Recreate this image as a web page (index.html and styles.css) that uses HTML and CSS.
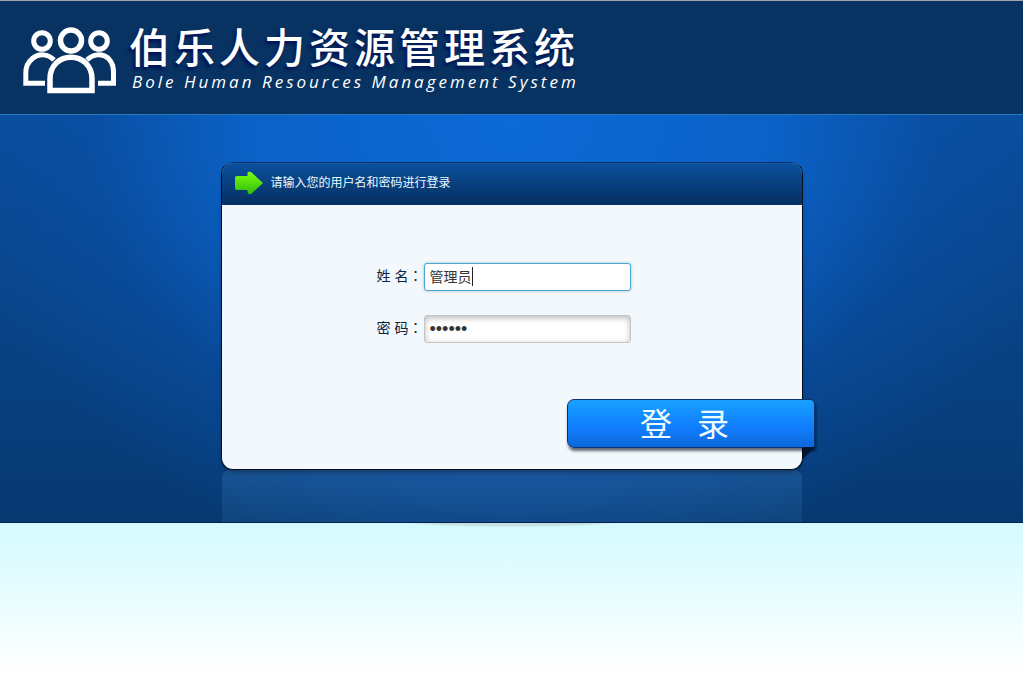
FILE: index.html
```html
<!DOCTYPE html>
<html lang="zh-CN">
<head>
    <meta charset="UTF-8">
    <meta name="viewport" content="width=device-width, initial-scale=1.0">
    <title>伯乐人力资源管理系统</title>
    <link rel="stylesheet" href="styles.css">
</head>
<body>

    <header class="header">
        <svg class="logo" viewBox="0 0 94 68" fill="none" stroke="#fff" stroke-width="5" aria-hidden="true">
            <circle cx="19" cy="15" r="8.3"/>
            <circle cx="76" cy="15" r="8.3"/>
            <circle cx="48" cy="14.5" r="10.5" stroke-width="5.5"/>
            <path d="M31 34C25 28 16 27 10 32C4 37 2.8 41 2.8 48V57.3H22"/>
            <path d="M64 34C70 28 79 27 85 32C90 37 90.5 41 90.5 48V57.3H75"/>
            <path d="M27 64.500V53C27 24 69 24 69 53V64.500Z" stroke-width="5.5"/>
        </svg>
        <div class="brand">
            <h1>伯乐人力资源管理系统</h1>
            <p>Bole Human Resources Management System</p>
        </div>
    </header>

    <main class="stage">
        <section class="panel">
            <div class="panel-head">
                <svg class="arrow" viewBox="0 0 30 26" aria-hidden="true">
                    <defs>
                        <linearGradient id="green" x1="0" y1="0" x2="0" y2="1">
                            <stop offset="0" stop-color="#7dff10"/>
                            <stop offset="1" stop-color="#2cbd0a"/>
                        </linearGradient>
                    </defs>
                    <path d="M3 6H13.500V3Q14 1 17 2L29 13L17 24Q14 25 13.500 22V20H3Q1 20 1 18V8Q1 6 3 6Z" fill="url(#green)"/>
                </svg>
                <h2>请输入您的用户名和密码进行登录</h2>
            </div>

            <!-- Login Form -->
            <form class="login-form">
                <div class="field">
                    <label for="username">姓 名<span lang="zh-TW">：</span></label>
                    <input type="text" id="username" class="active" value="管理员">
                </div>
                <div class="field">
                    <label for="password">密 码<span lang="zh-TW">：</span></label>
                    <input type="password" id="password" value="123456">
                </div>
                <button type="submit">登<span></span>录</button>
            </form>
        </section>
        <div class="reflection"></div>
    </main>

    <div class="floor-shadow"></div>

</body>
</html>
```

FILE: styles.css
```css
* {
    box-sizing: border-box;
}
body {
    margin: 0;
    min-height: 100vh;
    display: flex;
    flex-direction: column;
    font-family: "Liberation Sans", "Noto Sans CJK SC", sans-serif;
    background: linear-gradient(#d3faff 523px, #fff 673px);
}
.header {
    display: flex;
    align-items: flex-start;
    gap: 12px;
    padding: 25px 23px 20px;
    background-color: #073261;
    border-top: 1px solid #a2a5a5;
    border-bottom: 1px solid #287ab8;
}
.logo {
    width: 94px;
    height: 68px;
    flex-shrink: 0;
}
.brand {
    color: #fff;
    white-space: nowrap;
}
.brand h1 {
    margin: 0;
    font-size: 41px;
    line-height: 46px;
    font-weight: 500;
    letter-spacing: 4px;
    text-shadow: -2px 3px 3px #001458;
}
.brand p {
    margin: 0 0 0 3px;
    font-family: "Open Sans", sans-serif;
    font-size: 17px;
    line-height: 20px;
    font-style: italic;
    letter-spacing: 3px;
}
.stage {
    padding: 47px 20px 0;
    display: flex;
    flex-direction: column;
    align-items: center;
    border-bottom: 1px solid #04204a;
    background:
        radial-gradient(ellipse 56% 115% at 50% 0, #0c69d6 0%, #0b62c8 45%, rgba(9, 80, 168, 0.5) 75%, rgba(7, 62, 126, 0) 100%),
        linear-gradient(#0a4d9c, #073971);
}
.panel {
    width: 100%;
    max-width: 582px;
    background-color: #f2f8fc;
    border: 1px solid #020d1d;
    border-top-color: #06306c;
    border-radius: 12px;
    box-shadow: 0 5px 6px -4px #001229;
}
.panel-head {
    height: 42px;
    padding: 0 0 2px 12px;
    display: flex;
    align-items: center;
    gap: 7px;
    border-radius: 11px 11px 0 0;
    background: linear-gradient(#0b509f, #062f60);
    box-shadow: inset 0 1px 0 #17589f;
}
.arrow {
    width: 30px;
    height: 26px;
}
.panel-head h2 {
    margin: 0;
    color: #e8fbff;
    font-size: 12px;
    line-height: 12px;
    font-weight: 400;
}
.login-form {
    padding: 58px 0 21px;
    display: flex;
    flex-direction: column;
    align-items: center;
    gap: 24px;
}
.field {
    display: grid;
    grid-template-columns: 47px 207px;
    align-items: start;
    margin-right: 16px;
}
.field label {
    color: #0b2244;
    font-size: 14px;
    line-height: 26px;
    height: 26px;
    white-space: nowrap;
}
/* this face centres the full-width colon */
.field label span {
    font-family: "Liberation Sans", "Noto Sans CJK TC", sans-serif;
}
.field input {
    width: 100%;
    height: 28px;
    padding: 0 5px 2px;
    font-family: inherit;
    font-size: 14px;
    color: #333;
    background-color: #fff;
    border: 1px solid #c4c4c4;
    border-radius: 3px;
    outline: none;
    box-shadow: inset 0 2px 6px #bbb;
}
.field input[type="password"] {
    padding-bottom: 0;
    font-family: "Liberation Sans", sans-serif;
    font-size: 18px;
}
/* focused look, with the text cursor after the name */
.field .active {
    border-color: #4ba6d6;
    box-shadow: 0 0 3px #9fb9c8;
    caret-color: transparent;
    background: linear-gradient(#222, #222) 47px 3px / 1px 19px no-repeat #fff;
}
.login-form button {
    position: relative;
    align-self: flex-end;
    width: 248px;
    height: 49px;
    margin: 32px -13px 0 0;
    padding: 2px 12px 0 0;
    display: flex;
    justify-content: center;
    align-items: center;
    color: #eefcff;
    font-family: inherit;
    font-size: 32px;
    font-weight: 400;
    line-height: 40px;
    background: linear-gradient(#18a1ff, #117fff 55%, #0c68da);
    border: 1px solid #08356e;
    border-radius: 7px 5px 0 7px;
    box-shadow: 1px 3px 3px rgba(0, 10, 30, 0.6);
    cursor: pointer;
}
.login-form button span {
    width: 25px;
}
/* folded corner behind the button */
.login-form button::after {
    content: "";
    position: absolute;
    right: -1px;
    top: 100%;
    border-top: 12px solid #04142d;
    border-right: 12px solid transparent;
}
.reflection {
    width: 100%;
    max-width: 580px;
    height: 52px;
    border-radius: 8px 8px 0 0;
    background: linear-gradient(rgba(80, 150, 220, 0.22), rgba(80, 150, 210, 0.12));
}
.floor-shadow {
    width: 218px;
    height: 4px;
    margin: 0 auto;
    background: radial-gradient(ellipse at 50% 0, #c4e0e4 50%, rgba(196, 224, 228, 0) 70%);
}
```
